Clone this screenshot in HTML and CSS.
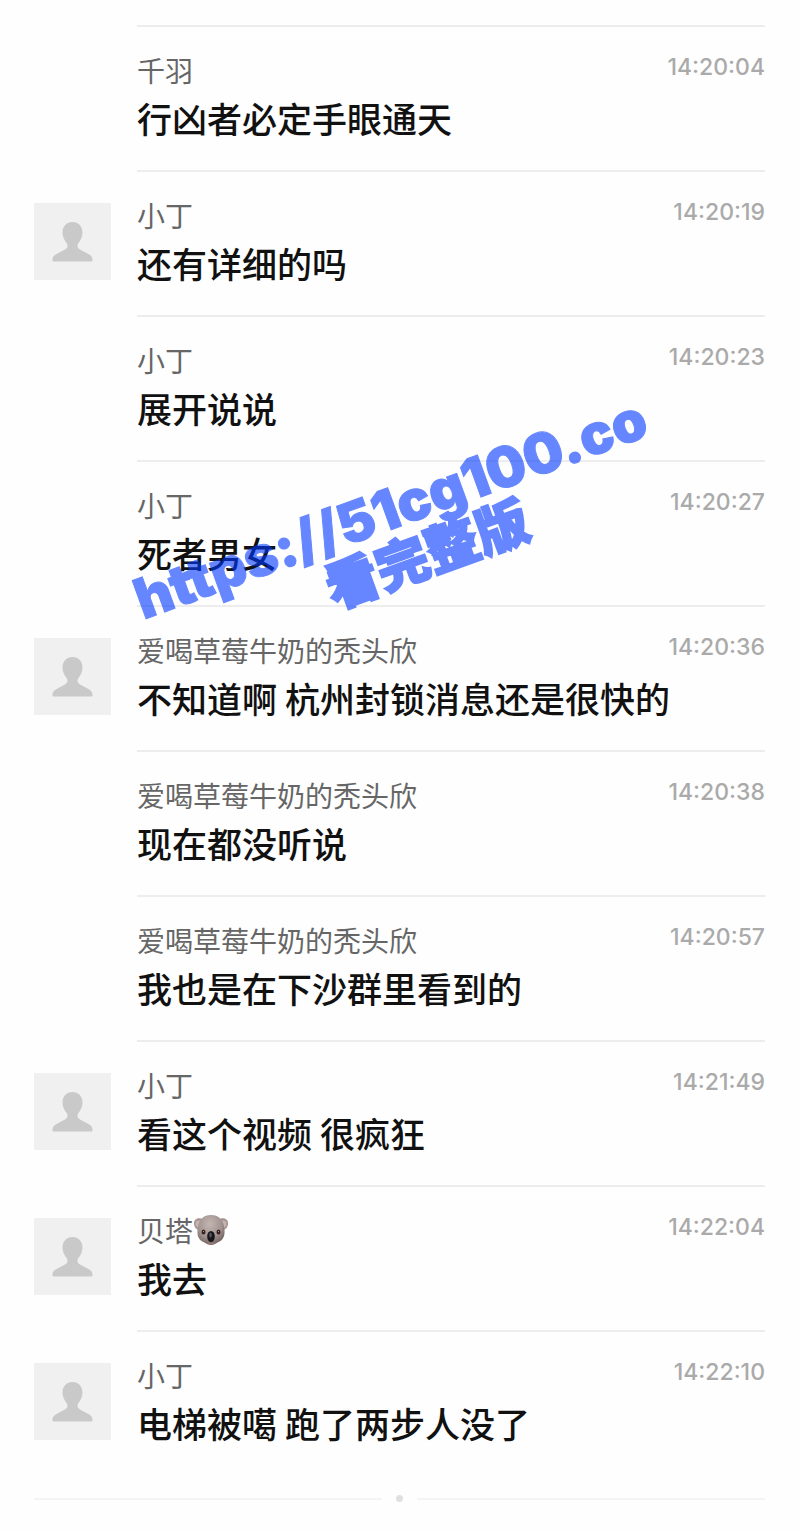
FILE: index.html
```html
<!DOCTYPE html>
<html lang="zh-CN">
<head>
  <meta charset="UTF-8">
  <meta name="viewport" content="width=device-width, initial-scale=1.0">
  <title>聊天记录</title>
  <link rel="stylesheet" href="styles.css">
</head>
<body>
  <svg width="0" height="0" class="defs" aria-hidden="true">
    <symbol id="person" viewBox="0 0 77 77">
      <path d="M38.500 19C32.500 19 28.500 23.500 28.500 29.500C28.500 34 30.500 37.500 33 40.500C34 43.500 33.500 45 31 46.500L23.500 50.500C19.500 52.500 18.500 54 18.500 57.500Q18.500 58.500 19.500 58.500H57.500Q58.500 58.500 58.500 57.500C58.500 54 57.500 52.500 53.500 50.500L46 46.500C43.500 45 43 43.500 44 40.500C46.500 37.500 48.500 34 48.500 29.500C48.500 23.500 44.500 19 38.500 19Z" fill="#c9c9c9"/>
    </symbol>
  </svg>

  <main class="chat">
    <ol class="messages">
      <li class="message">
        <div class="side"></div>
        <div class="content">
          <div class="head">
            <span class="name">千羽</span>
            <time class="time">14:20:04</time>
          </div>
          <div class="text">行凶者必定手眼通天</div>
        </div>
      </li>
      <li class="message">
        <div class="side"><svg class="avatar"><use href="#person"/></svg></div>
        <div class="content">
          <div class="head">
            <span class="name">小丁</span>
            <time class="time">14:20:19</time>
          </div>
          <div class="text">还有详细的吗</div>
        </div>
      </li>
      <li class="message">
        <div class="side"></div>
        <div class="content">
          <div class="head">
            <span class="name">小丁</span>
            <time class="time">14:20:23</time>
          </div>
          <div class="text">展开说说</div>
        </div>
      </li>
      <li class="message">
        <div class="side"></div>
        <div class="content">
          <div class="head">
            <span class="name">小丁</span>
            <time class="time">14:20:27</time>
          </div>
          <div class="text">死者男女</div>
        </div>
      </li>
      <li class="message">
        <div class="side"><svg class="avatar"><use href="#person"/></svg></div>
        <div class="content">
          <div class="head">
            <span class="name">爱喝草莓牛奶的秃头欣</span>
            <time class="time">14:20:36</time>
          </div>
          <div class="text">不知道啊 杭州封锁消息还是很快的</div>
        </div>
      </li>
      <li class="message">
        <div class="side"></div>
        <div class="content">
          <div class="head">
            <span class="name">爱喝草莓牛奶的秃头欣</span>
            <time class="time">14:20:38</time>
          </div>
          <div class="text">现在都没听说</div>
        </div>
      </li>
      <li class="message">
        <div class="side"></div>
        <div class="content">
          <div class="head">
            <span class="name">爱喝草莓牛奶的秃头欣</span>
            <time class="time">14:20:57</time>
          </div>
          <div class="text">我也是在下沙群里看到的</div>
        </div>
      </li>
      <li class="message">
        <div class="side"><svg class="avatar"><use href="#person"/></svg></div>
        <div class="content">
          <div class="head">
            <span class="name">小丁</span>
            <time class="time">14:21:49</time>
          </div>
          <div class="text">看这个视频 很疯狂</div>
        </div>
      </li>
      <li class="message">
        <div class="side"><svg class="avatar"><use href="#person"/></svg></div>
        <div class="content">
          <div class="head">
            <span class="name">贝塔<svg class="koala" viewBox="0 0 36 32" role="img" aria-label="考拉">
              <defs>
                <radialGradient id="fur" cx="45%" cy="30%" r="75%">
                  <stop offset="0" stop-color="#c3b6b2"/>
                  <stop offset="0.6" stop-color="#a09290"/>
                  <stop offset="1" stop-color="#695855"/>
                </radialGradient>
              </defs>
              <path d="M10 5C6 3 1 4.500 1 9C1 13 3 16 7 16L12 9Z" fill="#a3928e"/>
              <path d="M26 5C30 3 35 4.500 35 9C35 13 33 16 29 16L24 9Z" fill="#a3928e"/>
              <path d="M8 7C5 5.500 2.500 7 2.500 9.500C2.500 12 4 14 6.500 14Z" fill="#c7b3b1"/>
              <path d="M28 7C31 5.500 33.500 7 33.500 9.500C33.500 12 32 14 29.500 14Z" fill="#c7b3b1"/>
              <path d="M18 1C9.500 1 5 7 4.500 16C4 22 6 26 10.500 28C13 29.500 15 31 18 31C21 31 23 29.500 25.500 28C30 26 32 22 31.500 16C31 7 26.500 1 18 1Z" fill="url(#fur)"/>
              <ellipse cx="10.500" cy="18" rx="2" ry="2.500" fill="#3a211d"/>
              <ellipse cx="25.500" cy="18" rx="2" ry="2.500" fill="#3a211d"/>
              <circle cx="10.500" cy="17.500" r="0.500" fill="#d9b8aa"/>
              <circle cx="25.500" cy="17.500" r="0.500" fill="#d9b8aa"/>
              <path d="M14 28C16 30 20 30 22 28C21 31 15 31 14 28Z" fill="#bd8b8d"/>
              <ellipse cx="18" cy="22.500" rx="3.800" ry="5.500" fill="#171719"/>
              <ellipse cx="17.500" cy="21" rx="1.300" ry="2.500" fill="#56565c"/>
            </svg></span>
            <time class="time">14:22:04</time>
          </div>
          <div class="text">我去</div>
        </div>
      </li>
      <li class="message">
        <div class="side"><svg class="avatar"><use href="#person"/></svg></div>
        <div class="content">
          <div class="head">
            <span class="name">小丁</span>
            <time class="time">14:22:10</time>
          </div>
          <div class="text">电梯被噶 跑了两步人没了</div>
        </div>
      </li>
    </ol>

    <div class="end"><span class="dot"></span></div>

    <div class="watermark">
      <div>https://51cg100.co</div>
      <div class="watermark-sub">看完整版</div>
    </div>
  </main>
</body>
</html>
```
FILE: styles.css
```css
body {
  margin: 0;
  background-color: #fefefe;
  font-family: "Noto Sans CJK SC", sans-serif;
}

.defs {
  position: absolute;
}

.chat {
  position: relative;
  padding: 25px 35px 28px 34px;
  overflow: hidden;
}

.messages {
  list-style: none;
  margin: 0;
  padding: 0;
}

.message {
  display: flex;
  gap: 26px;
}

.side {
  flex: none;
  width: 77px;
  padding-top: 33px;
}

.avatar {
  display: block;
  width: 77px;
  height: 77px;
  background-color: #f0f0f0;
}

.content {
  flex: 1;
  border-top: 2px solid #ededed;
  padding: 25px 0 29px;
}

.head {
  display: flex;
  justify-content: space-between;
  align-items: flex-start;
}

.name {
  display: flex;
  align-items: center;
  font-size: 28px;
  line-height: 36px;
  color: #666;
}

.text {
  margin-top: 7px;
  font-size: 35px;
  font-weight: 500;
  line-height: 46px;
  color: #111;
}

.koala {
  width: 36px;
  height: 32px;
}

.time {
  font-family: Inter, sans-serif;
  font-size: 23px;
  font-weight: 500;
  line-height: 30px;
  color: #aaa;
}

.end {
  display: flex;
  align-items: center;
  gap: 14px;
  margin-top: 20px;
}

.end::before,
.end::after {
  content: "";
  flex: 1;
  height: 2px;
  background-color: #f4f4f4;
}

.dot {
  width: 7px;
  height: 7px;
  border-radius: 50%;
  background-color: #e0e0e0;
}

/* diagonal link over the chat */
.watermark {
  position: absolute;
  top: 535px;
  left: 50%;
  transform: translate(-50%, -50%) rotate(-20deg);
  font-family: Inter, "Noto Sans CJK SC", sans-serif;
  font-size: 56px;
  font-weight: 900;
  line-height: 56px;
  white-space: nowrap;
  text-align: center;
  color: #0038ff;
  -webkit-text-stroke: 1px #0038ff;
  opacity: 0.6;
  pointer-events: none;
}

.watermark-sub {
  padding-left: 38px;
  font-size: 53px;
  -webkit-text-stroke: 2px #0038ff;
}
```
